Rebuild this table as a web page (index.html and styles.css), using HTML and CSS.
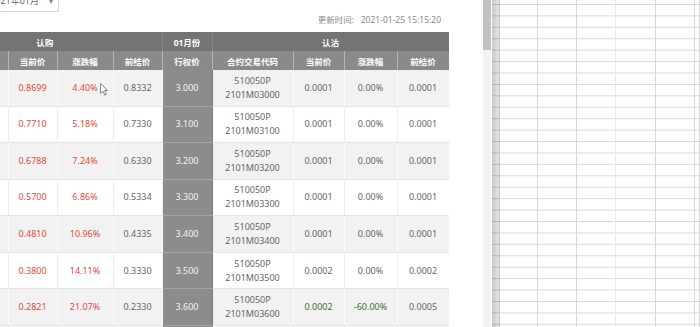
FILE: index.html
```html
<!DOCTYPE html>
<html lang="zh">
<head>
<meta charset="utf-8">
<title>期权报价</title>
<link rel="stylesheet" href="styles.css">
</head>
<body>
<div class="main">
  <div class="select"><span class="select-text">2021年01月</span><span class="caret">▾</span></div>
  <div class="updated">更新时间:&nbsp;&nbsp;&nbsp;2021-01-25 15:15:20</div>
  <div class="table-wrap">
    <table class="quotes">
      <colgroup>
        <col class="c-hidden"><col class="c-49"><col class="c-56"><col class="c-49"><col class="c-50"><col class="c-81"><col class="c-51"><col class="c-53"><col class="c-52">
      </colgroup>
      <thead>
        <tr class="h1"><th colspan="4">认购</th><th class="month">01月份</th><th colspan="4">认沽</th></tr>
        <tr class="h2"><th></th><th>当前价</th><th>涨跌幅</th><th>前结价</th><th>行权价</th><th>合约交易代码</th><th>当前价</th><th>涨跌幅</th><th>前结价</th></tr>
      </thead>
      <tbody>
        <tr class="odd"><td></td><td class="up">0.8699</td><td class="up">4.40%</td><td>0.8332</td><td class="strike">3.000</td><td class="code">510050P<br>2101M03000</td><td>0.0001</td><td>0.00%</td><td>0.0001</td></tr>
        <tr><td></td><td class="up">0.7710</td><td class="up">5.18%</td><td>0.7330</td><td class="strike">3.100</td><td class="code">510050P<br>2101M03100</td><td>0.0001</td><td>0.00%</td><td>0.0001</td></tr>
        <tr class="odd"><td></td><td class="up">0.6788</td><td class="up">7.24%</td><td>0.6330</td><td class="strike">3.200</td><td class="code">510050P<br>2101M03200</td><td>0.0001</td><td>0.00%</td><td>0.0001</td></tr>
        <tr><td></td><td class="up">0.5700</td><td class="up">6.86%</td><td>0.5334</td><td class="strike">3.300</td><td class="code">510050P<br>2101M03300</td><td>0.0001</td><td>0.00%</td><td>0.0001</td></tr>
        <tr class="odd"><td></td><td class="up">0.4810</td><td class="up">10.96%</td><td>0.4335</td><td class="strike">3.400</td><td class="code">510050P<br>2101M03400</td><td>0.0001</td><td>0.00%</td><td>0.0001</td></tr>
        <tr><td></td><td class="up">0.3800</td><td class="up">14.11%</td><td>0.3330</td><td class="strike">3.500</td><td class="code">510050P<br>2101M03500</td><td>0.0002</td><td>0.00%</td><td>0.0002</td></tr>
        <tr class="odd"><td></td><td class="up">0.2821</td><td class="up">21.07%</td><td>0.2330</td><td class="strike">3.600</td><td class="code">510050P<br>2101M03600</td><td class="down">0.0002</td><td class="down">-60.00%</td><td>0.0005</td></tr>
        <tr><td></td><td class="up">0.1950</td><td class="up">30.00%</td><td>0.1500</td><td class="strike">3.700</td><td class="code">510050P<br>2101M03700</td><td>0.0002</td><td>0.00%</td><td>0.0002</td></tr>
      </tbody>
    </table>
    <svg class="cursor" width="9" height="13" viewBox="0 0 9 13"><path d="M0.5 0.5 L0.5 10.5 L3 8.2 L4.8 12.2 L6.3 11.5 L4.6 7.6 L7.8 7.6 Z" fill="#fff" stroke="#777" stroke-width="0.9" stroke-linejoin="round"/></svg>
  </div>
</div>
<div class="scrollbar"><div class="thumb"></div></div>
<div class="sheet">
  <div class="rowhdr"></div>
  <div class="grid">
    <div class="gcol w38"></div><div class="gcol w39"></div><div class="gcol w39 light"></div><div class="gcol w40"></div><div class="gcol w39"></div><div class="gcol rest"></div>
  </div>
</div>
</body>
</html>
```
FILE: styles.css
```css
html, body {
  margin: 0;
  padding: 0;
  height: 327px;
  overflow: hidden;
  background: #fff;
}
body {
  display: flex;
  font-family: "Noto Sans", "Noto Sans CJK SC", sans-serif;
}
.main {
  width: 483px;
  flex: none;
  overflow: hidden;
}
.select {
  box-sizing: border-box;
  width: 100px;
  height: 23px;
  margin-left: -41px;
  margin-top: -11px;
  border: 1px solid #dcdcdc;
  display: flex;
  align-items: center;
  justify-content: flex-end;
  gap: 10px;
  padding-right: 5px;
  font-size: 9px;
  color: #666;
}
.caret {
  font-size: 8px;
  color: #888;
}
.updated {
  height: 20px;
  line-height: 16px;
  text-align: right;
  padding-right: 42px;
  font-size: 8.5px;
  color: #8a8a8a;
}
.table-wrap {
  width: 449px;
  overflow: hidden;
  position: relative;
}
.quotes {
  margin-left: -72px;
  width: 521px;
  table-layout: fixed;
  border-collapse: collapse;
  font-size: 9px;
}
.c-hidden { width: 80px; }
.c-49 { width: 49px; }
.c-56 { width: 56px; }
.c-50 { width: 50px; }
.c-81 { width: 81px; }
.c-51 { width: 51px; }
.c-53 { width: 53px; }
.c-52 { width: 52px; }
.quotes th {
  color: #fff;
  font-weight: bold;
  font-size: 8.5px;
  padding: 0;
  text-align: center;
}
.h1 th {
  height: 19px;
  background: #747474;
  border-right: 1px solid #858585;
}
.h2 th {
  height: 19px;
  background: #8a8a8a;
  border-right: 1px solid #b4b4b4;
}
.quotes td {
  height: 35.55px;
  padding: 0;
  text-align: center;
  color: #666;
  line-height: 14px;
  border-bottom: 1px solid #e4e4e4;
  border-right: 1px solid #eeeeee;
  background: #fff;
}
.quotes tr.odd td {
  background: #f2f2f2;
  border-right-color: #fbfbfb;
}
.quotes td.up { color: #e5493a; }
.quotes td.down { color: #3d6b33; }
.quotes td.strike,
.quotes tr.odd td.strike {
  background: #8c8c8c;
  color: #f2f2f2;
  border-left: 1px solid #7a7a7a;
  border-right: 1px solid #7a7a7a;
  border-bottom: 1px solid #a2a2a2;
}
.cursor {
  position: absolute;
  left: 100px;
  top: 51px;
}
.scrollbar {
  width: 8px;
  flex: none;
  background: #f2f2f2;
  margin-right: 1px;
}
.thumb {
  height: 50px;
  background: #c1c1c1;
}
.sheet {
  flex: 1;
  display: flex;
}
.rowhdr {
  width: 8px;
  flex: none;
  box-sizing: border-box;
  border-right: 1px solid #c6c6c6;
  background:
    linear-gradient(to bottom, #b0b0b0 0 1px, transparent 1px) 0 4px / 100% 11.43px,
    linear-gradient(to right, #c9c9c9, #e4e4e4);
}
.grid {
  flex: 1;
  display: flex;
  background: linear-gradient(to bottom, #d9d9d9 0 1px, transparent 1px) 0 4px / 100% 11.43px;
}
.gcol {
  box-sizing: border-box;
  border-right: 1px solid #d6d6d6;
  flex: none;
}
.gcol.light { border-right-color: #ececec; }
.w38 { width: 38px; }
.w39 { width: 39px; }
.w40 { width: 40px; }
.gcol.rest { flex: 1; }
```
